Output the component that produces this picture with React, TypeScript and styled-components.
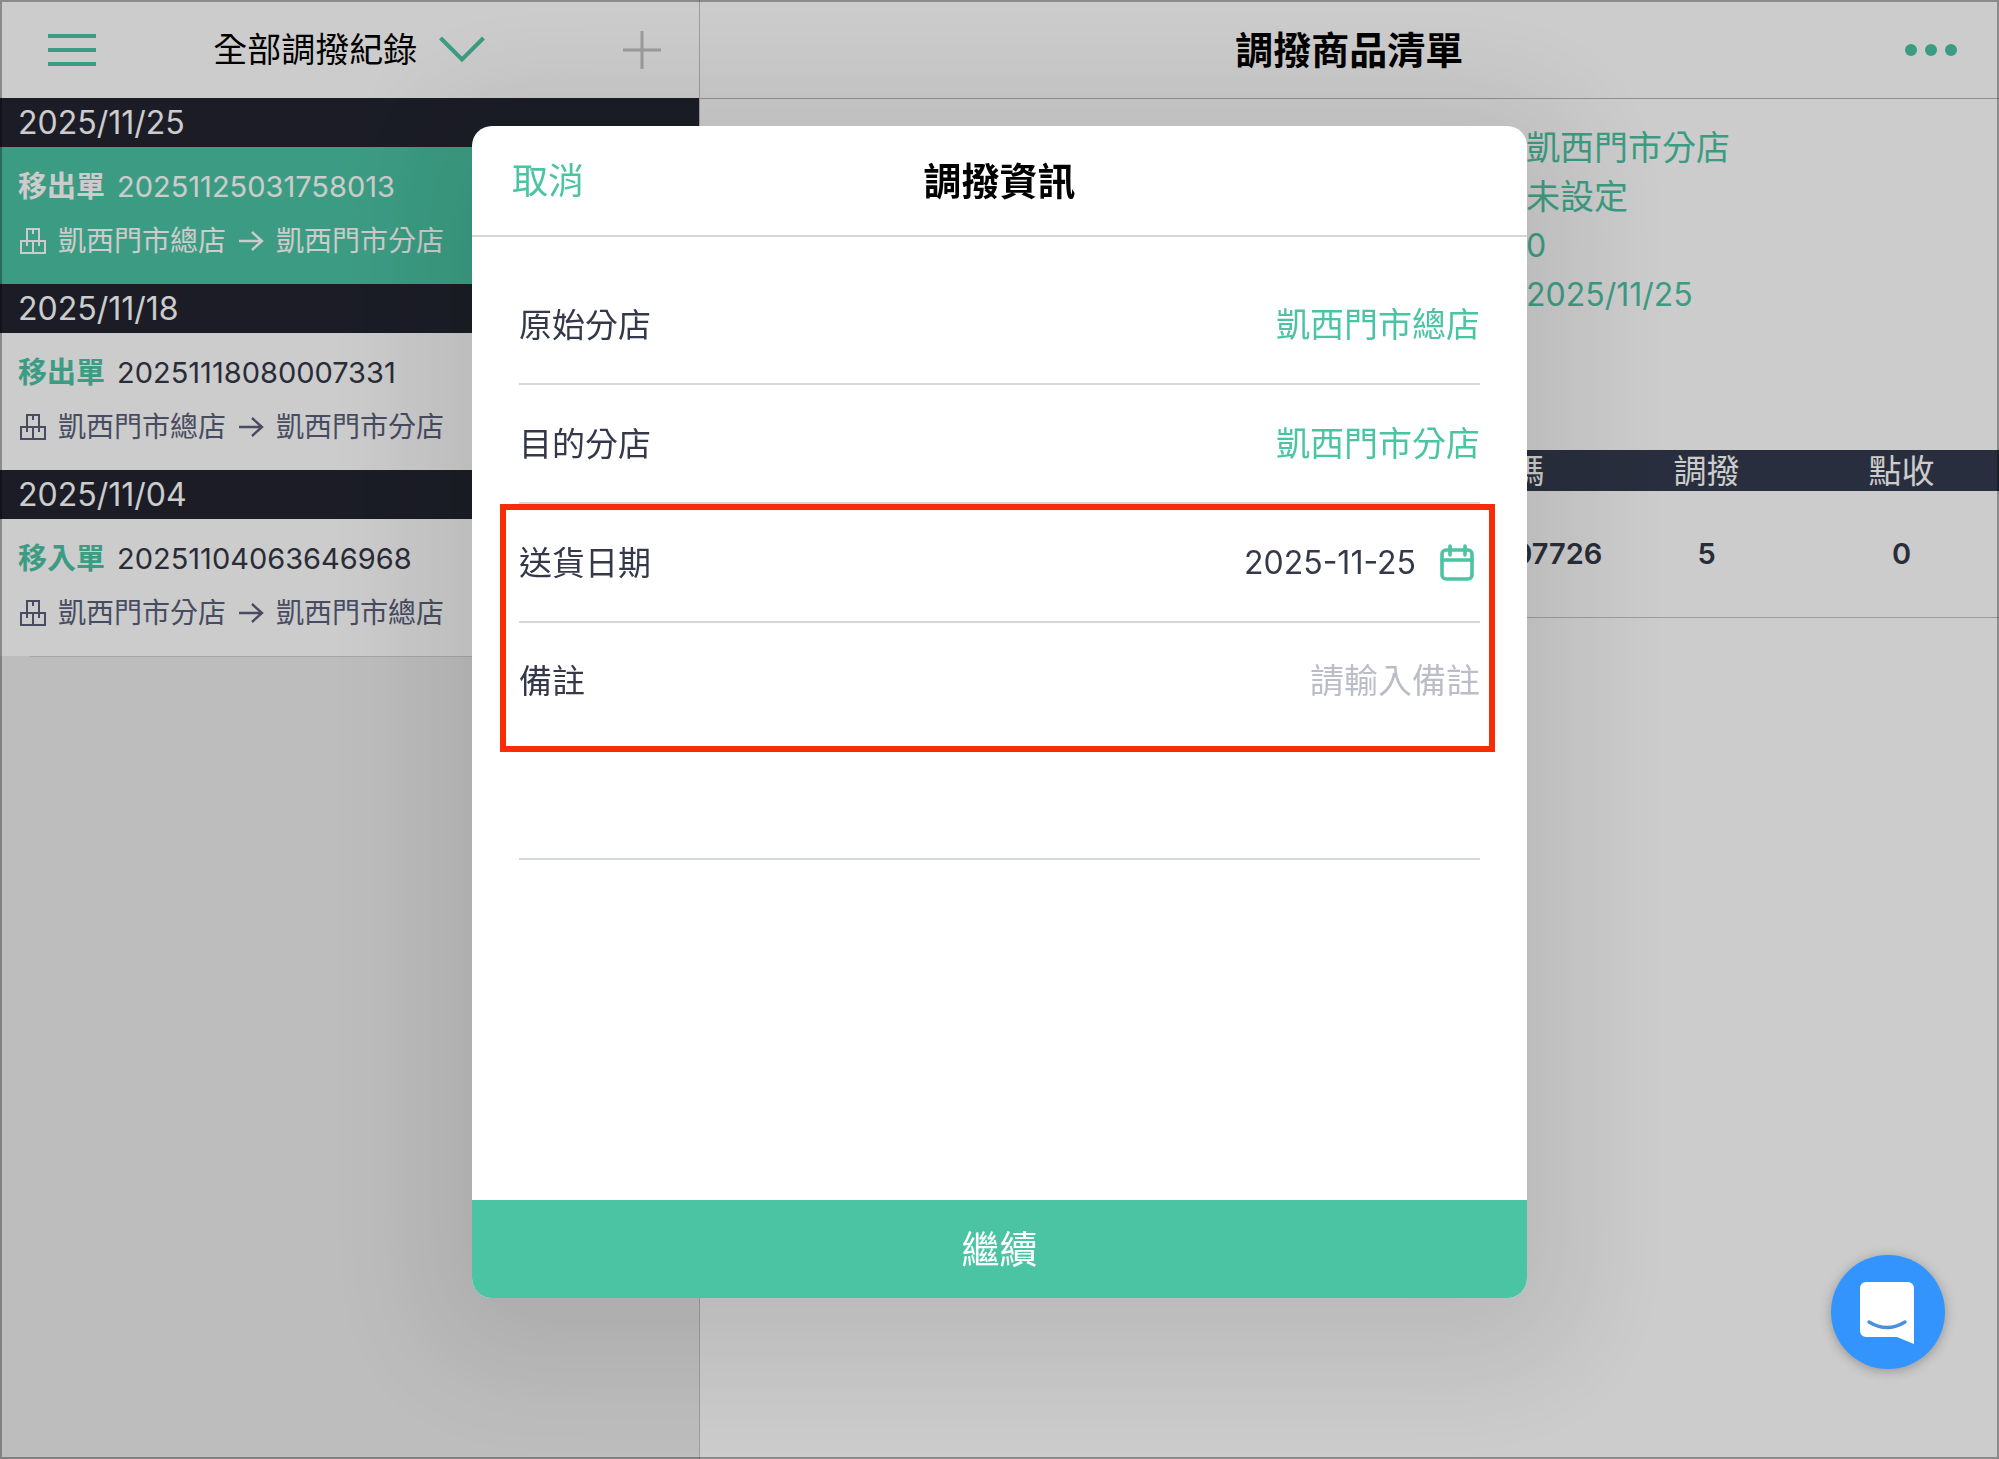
import React from "react";
import styled, { createGlobalStyle } from "styled-components";

const color = {
  brand: "#4bc4a4",
  ink: "#343848",
  muted: "#5a5f7a",
  dateBar: "#222430",
  tableBar: "#333a4d",
  rule: "#d5d8db",
  highlight: "#f92c08",
  chat: "#3394fe",
};

const GlobalStyle = createGlobalStyle`
  *, *::before, *::after { box-sizing: border-box; }
  body {
    margin: 0;
    font-family: Inter, "Noto Sans CJK TC", sans-serif;
    color: ${color.ink};
  }
  button, input, textarea, select {
    font: inherit;
    color: inherit;
    background: none;
    border: 0;
    padding: 0;
    margin: 0;
  }
  button { cursor: pointer; }
  h1, h2, p, ul, dl { margin: 0; padding: 0; }
  ul { list-style: none; }
  svg { display: block; flex: none; }
`;

const Page = styled.div`
  display: flex;
  min-height: 100vh;
  background: #fff;
`;

/* ---------- Sidebar ---------- */

const Sidebar = styled.aside`
  flex: 0 0 35%;
  min-width: 0;
  background: #ededed;
  border-right: 1px solid #c4c4c4;
`;

const SidebarHeader = styled.header`
  display: grid;
  grid-template-columns: 1fr auto 1fr;
  align-items: center;
  height: 98px;
  padding: 2px 38px 0;
  background: #fff;
`;

const IconButton = styled.button<{ $end?: boolean; $inset?: boolean }>`
  display: flex;
  justify-self: ${(p) => (p.$end ? "end" : "start")};
  padding-left: ${(p) => (p.$inset ? 10 : 0)}px;
`;

const FilterPicker = styled.label`
  display: flex;
  align-items: center;
  gap: 22px;
`;

const FilterSelect = styled.select`
  appearance: none;
  height: 48px;
  font-size: 34px;
  line-height: 48px;
  color: #000;
`;

const DateBar = styled.h2`
  height: 49px;
  padding-left: 18px;
  font-size: 32px;
  font-weight: 400;
  line-height: 49px;
  color: #fff;
  background: ${color.dateBar};
`;

const Record = styled.button<{ $active?: boolean }>`
  display: flex;
  flex-direction: column;
  gap: 14px;
  width: 100%;
  height: 137px;
  padding: 20px 18px 0;
  text-align: left;
  color: ${(p) => (p.$active ? "#fff" : color.ink)};
  background: ${(p) => (p.$active ? color.brand : "#fff")};
`;

const RecordTitle = styled.span`
  display: flex;
  align-items: center;
  gap: 12px;
  height: 40px;
  font-size: 29px;
  line-height: 40px;
`;

const RecordKind = styled.strong<{ $active?: boolean }>`
  font-weight: 700;
  color: ${(p) => (p.$active ? "#fff" : color.brand)};
`;

const Route = styled.span<{ $active?: boolean }>`
  display: flex;
  align-items: center;
  gap: 12px;
  height: 40px;
  padding-left: 2px;
  font-size: 28px;
  line-height: 40px;
  color: ${(p) => (p.$active ? "#fff" : color.muted)};
`;

const ListEnd = styled.div`
  height: 1px;
  margin-left: 30px;
  background: #cfcfcf;
`;

/* ---------- Detail ---------- */

const Detail = styled.main`
  flex: 1;
  min-width: 0;
`;

const DetailHeader = styled.header`
  display: grid;
  grid-template-columns: 1fr auto 1fr;
  align-items: center;
  height: 99px;
  padding: 2px 42px 0;
  border-bottom: 1px solid #b4b4b4;
`;

const DetailTitle = styled.h1`
  grid-column: 2;
  font-size: 38px;
  font-weight: 700;
  line-height: 48px;
  color: #000;
`;

const InfoList = styled.ul`
  width: 473px;
  margin: 0 0 0 auto;
  padding: 24px 0 131px;
  color: ${color.brand};
`;

const InfoItem = styled.li<{ $numeric?: boolean }>`
  height: 49px;
  font-size: ${(p) => (p.$numeric ? 32 : 34)}px;
  line-height: 49px;
`;

const ItemTable = styled.table`
  width: 100%;
  table-layout: fixed;
  border-collapse: collapse;
  text-align: center;
`;

const HeadCell = styled.th<{ $fixed?: boolean }>`
  width: ${(p) => (p.$fixed ? "195px" : "auto")};
  height: 41px;
  padding: 0;
  font-size: 33px;
  font-weight: 400;
  line-height: 40px;
  color: #fff;
  background: ${color.tableBar};
`;

const BodyCell = styled.td`
  height: 126px;
  padding: 0;
  font-size: 29px;
  font-weight: 600;
  border-bottom: 1px solid #c4c4c4;
`;

/* ---------- Dialog ---------- */

const Backdrop = styled.div`
  position: fixed;
  inset: 0;
  display: flex;
  justify-content: center;
  padding: 126px 24px 161px;
  background: rgba(0, 0, 0, 0.2);
  box-shadow: inset 0 0 0 2px rgba(0, 0, 0, 0.32);
`;

const Dialog = styled.form`
  display: flex;
  flex-direction: column;
  width: 100%;
  max-width: 1055px;
  overflow: hidden;
  background: #fff;
  border-radius: 20px;
  box-shadow: 0 20px 120px 50px rgba(0, 18, 0, 0.1);
`;

const DialogHeader = styled.header`
  display: grid;
  grid-template-columns: 1fr auto 1fr;
  align-items: center;
  height: 111px;
  padding: 0 40px;
  border-bottom: 2px solid #d6d6d6;
`;

const CancelButton = styled.button`
  justify-self: start;
  font-size: 36px;
  line-height: 48px;
  color: ${color.brand};
`;

const DialogTitle = styled.h2`
  font-size: 38px;
  font-weight: 700;
  line-height: 48px;
  color: #000;
`;

const DialogBody = styled.div`
  flex: 1;
  padding: 29px 47px;
`;

const Field = styled.div<{ $tall?: boolean }>`
  display: flex;
  justify-content: space-between;
  align-items: ${(p) => (p.$tall ? "flex-start" : "center")};
  height: ${(p) => (p.$tall ? 237 : 119)}px;
  padding-top: ${(p) => (p.$tall ? 34 : 0)}px;
  border-bottom: 2px solid ${color.rule};
  font-size: 33px;
  line-height: 48px;
`;

const FieldValue = styled.output`
  font-size: 34px;
  color: ${color.brand};
`;

const DatePicker = styled.div`
  display: flex;
  align-items: center;
  gap: 24px;
  padding-right: 6px;
`;

const DateInput = styled.input`
  width: 240px;
  font-size: 32px;
  line-height: 48px;
  text-align: right;
`;

const NoteInput = styled.textarea`
  flex: 1;
  height: 192px;
  font-size: 34px;
  resize: none;
  text-align: right;
  &::placeholder {
    color: #bbbec8;
    opacity: 1;
  }
`;

const EditableFields = styled.div`
  position: relative;
`;

const HighlightFrame = styled.div`
  position: absolute;
  top: 0;
  left: -19px;
  right: -15px;
  height: 248px;
  border: 6px solid ${color.highlight};
  pointer-events: none;
`;

const SubmitButton = styled.button`
  height: 98px;
  font-size: 38px;
  line-height: 48px;
  color: #fff;
  background: ${color.brand};
`;

const ChatButton = styled.button`
  position: fixed;
  right: 54px;
  bottom: 90px;
  width: 114px;
  height: 114px;
  border-radius: 50%;
  background: ${color.chat};
  box-shadow: 0 2px 12px rgba(0, 0, 0, 0.28);
`;

/* ---------- Icons ---------- */

const MenuIcon = () => (
  <svg width="48" height="34" viewBox="0 0 48 34" fill="none" stroke={color.brand} strokeWidth="4">
    <path d="M0 3H48M0 17H48M0 31H48" />
  </svg>
);

const ChevronIcon = () => (
  <svg width="46" height="28" viewBox="0 0 46 28" fill="none" stroke={color.brand} strokeWidth="4">
    <path d="M1.5 2 23 23.5 44.5 2" />
  </svg>
);

const PlusIcon = () => (
  <svg width="38" height="38" viewBox="0 0 38 38" fill="none" stroke="#c2c2c2" strokeWidth="3">
    <path d="M19 0V38M0 19H38" />
  </svg>
);

const MoreIcon = () => (
  <svg width="52" height="12" viewBox="0 0 52 12" fill={color.brand}>
    <circle cx="6" cy="6" r="6" />
    <circle cx="26" cy="6" r="6" />
    <circle cx="46" cy="6" r="6" />
  </svg>
);

const BoxesIcon = () => (
  <svg width="26" height="26" viewBox="0 0 26 26" fill="none" stroke="currentColor" strokeWidth="2">
    <path d="M7 1H19V13H7ZM1 13H25V25H1ZM13 13V25M13 1V6M7 13V18M19 13V18" />
  </svg>
);

const ArrowIcon = () => (
  <svg width="26" height="22" viewBox="0 0 26 22" fill="none" stroke="currentColor" strokeWidth="2.4">
    <path d="M1 11H24M14 2 24 11 14 20" />
  </svg>
);

const CalendarIcon = () => (
  <svg
    width="34"
    height="38"
    viewBox="0 0 34 38"
    fill="none"
    stroke={color.brand}
    strokeWidth="3.6"
    strokeLinecap="round"
  >
    <rect x="2" y="6" width="30" height="29" rx="4" />
    <path d="M2 16H32M10 2V11M25 2V11" />
  </svg>
);

const ChatIcon = () => (
  <svg width="114" height="114" viewBox="0 0 114 114">
    <path
      d="M35 27H77A6 6 0 0 1 83 33V89L66 82H35A6 6 0 0 1 29 76V33A6 6 0 0 1 35 27Z"
      fill="#fff"
    />
    <path
      d="M38 67Q56 78 74 67"
      fill="none"
      stroke="#4a90e2"
      strokeWidth="3.4"
      strokeLinecap="round"
    />
  </svg>
);

/* ---------- Data ---------- */

const records = [
  {
    date: "2025/11/25",
    kind: "移出單",
    number: "20251125031758013",
    from: "凱西門市總店",
    to: "凱西門市分店",
    active: true,
  },
  {
    date: "2025/11/18",
    kind: "移出單",
    number: "20251118080007331",
    from: "凱西門市總店",
    to: "凱西門市分店",
    active: false,
  },
  {
    date: "2025/11/04",
    kind: "移入單",
    number: "20251104063646968",
    from: "凱西門市分店",
    to: "凱西門市總店",
    active: false,
  },
];

export default function App() {
  return (
    <>
      <GlobalStyle />
      <Page>
        <Sidebar>
          <SidebarHeader>
            <IconButton type="button" aria-label="選單" $inset>
              <MenuIcon />
            </IconButton>
            <FilterPicker>
              <FilterSelect aria-label="調撥紀錄篩選">
                <option>全部調撥紀錄</option>
              </FilterSelect>
              <ChevronIcon />
            </FilterPicker>
            <IconButton type="button" aria-label="新增" $end>
              <PlusIcon />
            </IconButton>
          </SidebarHeader>
          {records.map((r) => (
            <section key={r.number}>
              <DateBar>{r.date}</DateBar>
              <Record type="button" $active={r.active}>
                <RecordTitle>
                  <RecordKind $active={r.active}>{r.kind}</RecordKind>
                  <span>{r.number}</span>
                </RecordTitle>
                <Route $active={r.active}>
                  <BoxesIcon />
                  <span>{r.from}</span>
                  <ArrowIcon />
                  <span>{r.to}</span>
                </Route>
              </Record>
            </section>
          ))}
          <ListEnd />
        </Sidebar>

        <Detail>
          <DetailHeader>
            <DetailTitle>調撥商品清單</DetailTitle>
            <IconButton type="button" aria-label="更多" $end>
              <MoreIcon />
            </IconButton>
          </DetailHeader>
          <InfoList>
            <InfoItem>凱西門市分店</InfoItem>
            <InfoItem>未設定</InfoItem>
            <InfoItem $numeric>0</InfoItem>
            <InfoItem $numeric>2025/11/25</InfoItem>
          </InfoList>
          <ItemTable>
            <thead>
              <tr>
                <HeadCell>商品</HeadCell>
                <HeadCell $fixed>條碼</HeadCell>
                <HeadCell $fixed>調撥</HeadCell>
                <HeadCell $fixed>點收</HeadCell>
              </tr>
            </thead>
            <tbody>
              <tr>
                <BodyCell />
                <BodyCell>2025007726</BodyCell>
                <BodyCell>5</BodyCell>
                <BodyCell>0</BodyCell>
              </tr>
            </tbody>
          </ItemTable>
        </Detail>
      </Page>

      <Backdrop>
        <Dialog role="dialog" aria-labelledby="dialog-title" onSubmit={(e) => e.preventDefault()}>
          <DialogHeader>
            <CancelButton type="button">取消</CancelButton>
            <DialogTitle id="dialog-title">調撥資訊</DialogTitle>
          </DialogHeader>
          <DialogBody>
            <Field>
              <label htmlFor="source">原始分店</label>
              <FieldValue id="source">凱西門市總店</FieldValue>
            </Field>
            <Field>
              <label htmlFor="target">目的分店</label>
              <FieldValue id="target">凱西門市分店</FieldValue>
            </Field>
            <EditableFields>
              <Field>
                <label htmlFor="ship-date">送貨日期</label>
                <DatePicker>
                  <DateInput id="ship-date" type="text" defaultValue="2025-11-25" />
                  <IconButton type="button" aria-label="選擇日期">
                    <CalendarIcon />
                  </IconButton>
                </DatePicker>
              </Field>
              <Field $tall>
                <label htmlFor="note">備註</label>
                <NoteInput id="note" placeholder="請輸入備註" />
              </Field>
              <HighlightFrame />
            </EditableFields>
          </DialogBody>
          <SubmitButton type="submit">繼續</SubmitButton>
        </Dialog>
      </Backdrop>

      <ChatButton type="button" aria-label="線上客服">
        <ChatIcon />
      </ChatButton>
    </>
  );
}
